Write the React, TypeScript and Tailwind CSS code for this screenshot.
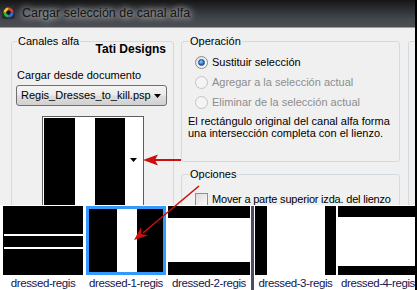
import React from "react";

const Radio = ({ checked, disabled }: { checked?: boolean; disabled?: boolean }) => (
  <span
    className={
      "flex h-[13px] w-[13px] shrink-0 items-center justify-center rounded-full border " +
      (disabled
        ? "border-[#c4c4c4] bg-[#f4f4f4]"
        : "border-[#8a8a8a] bg-[linear-gradient(135deg,#e0e0e0,#ffffff)]")
    }
  >
    {checked && (
      <span className="h-[7px] w-[7px] rounded-full border border-[#1b4f8a] bg-[radial-gradient(circle_at_40%_35%,#8fd2ff,#1f6fc8_60%,#123f80)]" />
    )}
  </span>
);

const GroupLabel = ({ children, left }: { children: React.ReactNode; left: string }) => (
  <span className={"absolute -top-[7px] bg-[#f0f0f0] px-[1px] leading-[13px] text-black " + left}>
    {children}
  </span>
);

export default function App() {
  return (
    <div className="relative h-[290px] w-[417px] overflow-hidden border-r-2 border-black bg-[#f0f0f0] font-['Liberation_Sans',Arial,sans-serif] text-[11px] text-black">
      {/* title bar */}
      <div className="flex h-[28px] items-center gap-[7px] border-b border-[#9a9ea2] bg-[linear-gradient(180deg,#151515_0%,#2c2f33_35%,#43474c_70%,#4b4f54_100%)] pb-[2px] pl-[2px]">
        <svg width="13" height="13" viewBox="0 0 13 13">
          <rect x="0" y="0" width="13" height="13" rx="2" fill="#2a2a33" />
          <path d="M6.5 1.5 A5 5 0 0 1 11.5 6.5 L6.5 6.5 Z" fill="#e23b3b" />
          <path d="M11.5 6.5 A5 5 0 0 1 6.5 11.5 L6.5 6.5 Z" fill="#2f6fe0" />
          <path d="M6.5 11.5 A5 5 0 0 1 1.5 6.5 L6.5 6.5 Z" fill="#31b04a" />
          <path d="M1.5 6.5 A5 5 0 0 1 6.5 1.5 L6.5 6.5 Z" fill="#e6c629" />
          <circle cx="6.5" cy="6.5" r="2.2" fill="#141414" />
        </svg>
        <span className="text-[12.5px] leading-[16px] text-[#141414] [text-shadow:0_0_6px_rgba(255,255,255,0.9),0_0_10px_rgba(255,255,255,0.6)]">
          Cargar selección de canal alfa
        </span>
      </div>

      {/* body */}
      <div className="flex h-[177px] items-start overflow-hidden pl-[11px] pt-[13px]">
        {/* Canales alfa */}
        <div className="relative h-[200px] w-[163px] shrink-0 rounded-[3px] border border-[#d3dbe0]">
          <GroupLabel left="left-[5px]">Canales alfa</GroupLabel>
          <div className="h-[14px] pr-[7px] text-right text-[12px] font-bold leading-[14px]">Tati Designs</div>
          <div className="mt-[13px] h-[13px] pl-[5px] leading-[13px]">Cargar desde documento</div>
          <div className="ml-[4px] mt-[3px] flex h-[21px] w-[151px] items-center justify-between rounded-[3px] border border-[#707070] bg-[linear-gradient(180deg,#f4f4f4_0%,#ececec_45%,#dedede_55%,#d0d0d0_100%)] pl-[4px] pr-[5px]">
            <span className="leading-[13px]">Regis_Dresses_to_kill.psp</span>
            <svg width="7" height="4" viewBox="0 0 7 4">
              <path d="M0 0 H7 L3.5 4 Z" fill="#000" />
            </svg>
          </div>
          <div className="mx-auto mt-[10px] flex h-[95px] w-[102px] border border-[#5e5e5e] bg-white p-[1px]">
            <div className="w-[31px] bg-black" />
            <div className="w-[20px] bg-white" />
            <div className="w-[30px] bg-black" />
            <div className="flex flex-1 justify-center pt-[40px]">
              <svg width="7" height="4" viewBox="0 0 7 4">
                <path d="M0 0 H7 L3.5 4 Z" fill="#000" />
              </svg>
            </div>
          </div>
        </div>

        {/* right column */}
        <div className="ml-[7px] flex w-[219px] shrink-0 flex-col">
          <div className="relative h-[121px] shrink-0 rounded-[3px] border border-[#d3dbe0]">
            <GroupLabel left="left-[7px]">Operación</GroupLabel>
            <div className="pt-[10px]">
              <div className="flex h-[20px] items-center gap-[4px] pl-[13px]">
                <Radio checked />
                <span className="leading-[13px]">Sustituir selección</span>
              </div>
              <div className="flex h-[20px] items-center gap-[4px] pl-[13px] text-[#8d8d8d]">
                <Radio disabled />
                <span className="leading-[13px]">Agregar a la selección actual</span>
              </div>
              <div className="flex h-[20px] items-center gap-[4px] pl-[13px] text-[#8d8d8d]">
                <Radio disabled />
                <span className="leading-[13px]">Eliminar de la selección actual</span>
              </div>
            </div>
            <p className="mt-[3px] pl-[6px] leading-[12px]">
              El rectángulo original del canal alfa forma
              <br />
              una intersección completa con el lienzo.
            </p>
          </div>
          <div className="relative mt-[12px] h-[60px] shrink-0 rounded-[3px] border border-[#d3dbe0]">
            <GroupLabel left="left-[7px]">Opciones</GroupLabel>
            <div className="mt-[18px] flex h-[13px] items-center gap-[4px] pl-[13px]">
              <span className="h-[13px] w-[13px] shrink-0 border border-[#8e8f8f] bg-[linear-gradient(135deg,#dcdcdc,#fbfbfb)]" />
              <span className="leading-[13px] tracking-[-0.2px]">Mover a parte superior izda. del lienzo</span>
            </div>
          </div>
        </div>

        {/* partial third group */}
        <div className="ml-[8px] h-[200px] w-[40px] shrink-0 rounded-[3px] border border-[#d3dbe0]" />
      </div>

      {/* thumbnail strip */}
      <div className="flex h-[85px] items-start bg-white pl-[3px] pt-[1px] text-[11.5px] text-[#14144e]">
        <div className="flex w-[80px] shrink-0 flex-col items-center">
          <div className="flex h-[69px] w-full flex-col bg-black">
            <div className="h-[28px]" />
            <div className="ml-[1px] h-[2px] bg-white" />
            <div className="h-[11px]" />
            <div className="ml-[1px] h-[2px] bg-white" />
          </div>
          <span className="mt-[1px] leading-[14px] tracking-[-0.4px]">dressed-regis</span>
        </div>
        <div className="ml-[3px] flex w-[80px] shrink-0 flex-col items-center">
          <div className="flex h-[69px] w-full border-[3px] border-[#3399ff]">
            <div className="w-[28px] bg-black" />
            <div className="w-[20px] bg-white" />
            <div className="flex-1 bg-black" />
          </div>
          <span className="mt-[1px] leading-[14px] tracking-[-0.4px]">dressed-1-regis</span>
        </div>
        <div className="ml-[2px] flex w-[82px] shrink-0 flex-col items-center">
          <div className="flex h-[69px] w-full flex-col bg-white">
            <div className="h-[12px] bg-black" />
            <div className="flex-1" />
            <div className="h-[13px] bg-black" />
          </div>
          <span className="mt-[1px] leading-[14px] tracking-[-0.4px]">dressed-2-regis</span>
        </div>
        <div className="ml-[1px] h-[85px] w-[3px] shrink-0 bg-[#4c4c66]" />
        <div className="ml-[1px] flex w-[81px] shrink-0 flex-col items-center">
          <div className="flex h-[69px] w-full bg-white">
            <div className="w-[12px] bg-black" />
            <div className="flex-1" />
            <div className="w-[11px] bg-black" />
          </div>
          <span className="mt-[1px] leading-[14px] tracking-[-0.4px]">dressed-3-regis</span>
        </div>
        <div className="ml-[2px] flex w-[80px] shrink-0 flex-col items-center">
          <div className="flex h-[69px] w-full flex-col bg-white">
            <div className="h-[11px] bg-black" />
            <div className="flex-1" />
            <div className="h-[9px] bg-black" />
          </div>
          <span className="mt-[1px] leading-[14px] tracking-[-0.4px]">dressed-4-regis</span>
        </div>
      </div>

      {/* red annotation arrows */}
      <svg className="pointer-events-none absolute left-0 top-0" width="417" height="290" viewBox="0 0 417 290">
        <line x1="181" y1="160" x2="154" y2="160" stroke="#cc1010" strokeWidth="2" />
        <path d="M143 160 L158 154.5 L155 160 L158 165.5 Z" fill="#cc1010" />
        <line x1="199" y1="186" x2="143" y2="233" stroke="#cc1010" strokeWidth="1.6" />
        <path d="M134 240 L148 235.6 L141.4 234 L141 227.2 Z" fill="#cc1010" />
      </svg>
    </div>
  );
}
